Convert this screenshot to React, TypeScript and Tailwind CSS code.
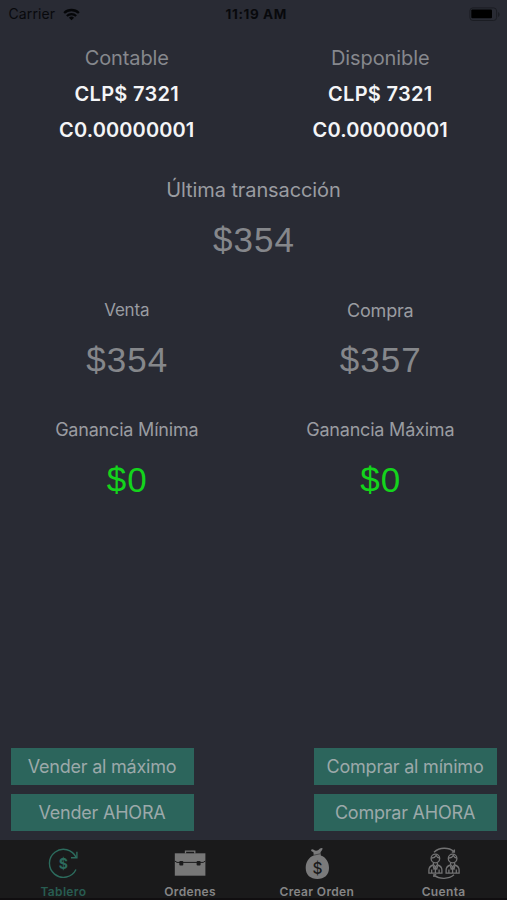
import type { ReactNode } from "react";

function WifiIcon() {
  return (
    <svg width="17" height="13" viewBox="0 0 18 13" fill="none" stroke="#050608" strokeWidth="2.4">
      <path d="M1.2 4.9a11.2 11.2 0 0 1 15.6 0" />
      <path d="M4.1 8.1a7.1 7.1 0 0 1 9.8 0" />
      <path d="M9 12.7 6.3 10a3.9 3.9 0 0 1 5.4 0z" fill="#050608" stroke="none" />
    </svg>
  );
}

function BatteryIcon() {
  return (
    <svg width="32" height="15" viewBox="0 0 32 15">
      <rect x="0.9" y="0.9" width="26.7" height="12.6" rx="3" fill="none" stroke="#1b1d23" strokeWidth="1" />
      <rect x="2.3" y="2.5" width="20.7" height="8.8" rx="1" fill="#000" />
      <path d="M29 5v5c1-.4 1.6-1.3 1.6-2.5S30 5.4 29 5z" fill="#1b1d23" />
    </svg>
  );
}

function StatusBar() {
  return (
    <header className="grid h-7 grid-cols-3 items-center pl-[8.5px] pr-[6px] text-[#08090c]">
      <div className="flex items-center gap-[7.5px]">
        <span className="text-[14px] leading-none tracking-[0.1px]">Carrier</span>
        <WifiIcon />
      </div>
      <span className="pl-[3px] pt-px text-center text-[13.5px] font-bold leading-none tracking-[0.6px]">
        11:19 AM
      </span>
      <div className="flex justify-end">
        <BatteryIcon />
      </div>
    </header>
  );
}

function Balance({ label }: { label: string }) {
  return (
    <div className="flex flex-col items-center">
      <h2 className="flex h-[34px] items-center text-[20px] tracking-[-0.1px] text-[#86888d]">{label}</h2>
      <p className="flex h-[37px] items-center text-[20px] font-semibold tracking-[0.3px]">CLP$ 7321</p>
      <p className="flex h-[35px] items-center text-[20px] font-semibold tracking-[0.12px]">C0.00000001</p>
    </div>
  );
}

type QuoteProps = { label: string; value: string; labelClass?: string; valueClass?: string };

function Quote({
  label,
  value,
  labelClass = "text-[18px] tracking-[-0.2px]",
  valueClass = "text-[#85878b]",
}: QuoteProps) {
  return (
    <div className="flex h-[120px] flex-col items-center">
      <h3 className={`flex h-10 items-center whitespace-nowrap text-[#9a9ca1] ${labelClass}`}>{label}</h3>
      <p
        className={`flex h-[60px] items-center pl-px font-['Liberation_Sans',sans-serif] text-[35px] tracking-[1px] ${valueClass}`}
      >
        {value}
      </p>
    </div>
  );
}

function TradeButton({ children }: { children: ReactNode }) {
  return (
    <button className="h-[37px] w-[183px] whitespace-nowrap bg-[#2c655c] text-[18px] tracking-[-0.22px] text-[#9ca9aa]">
      {children}
    </button>
  );
}

function DashboardIcon() {
  return (
    <svg width="32" height="32" viewBox="0 0 32 32" fill="none" stroke="#2c6b5d" strokeWidth="1.4">
      <path d="M29 22.5A14 14 0 1 1 29.2 10.5" />
      <path d="M24 10.8h5.9V4.7" />
      <text
        x="16.3"
        y="21.6"
        textAnchor="middle"
        fill="#2c6b5d"
        stroke="none"
        fontSize="14"
        fontWeight="700"
        fontFamily="Inter, sans-serif"
      >
        $
      </text>
    </svg>
  );
}

function BriefcaseIcon() {
  return (
    <svg width="32" height="32" viewBox="0 0 32 32">
      <path d="M11.5 6.5V4.200h9.300v2.300" fill="none" stroke="#777" strokeWidth="1.3" />
      <path d="M.8 6.300h30.600v22.400H.8z" fill="#777" />
      <path d="M.8 14 3 15.400h26.200l2.200-1.400" fill="none" stroke="#1b1b1c" strokeWidth="1" />
      <rect x="5.3" y="14" width="4" height="4.5" rx="1" fill="#1b1b1c" />
      <rect x="22.6" y="14" width="4" height="4.5" rx="1" fill="#1b1b1c" />
    </svg>
  );
}

function MoneyBagIcon() {
  return (
    <svg width="32" height="32" viewBox="0 0 32 32">
      <path
        d="M10.2 3.900c-.3-1.700 1.200-2.300 2.500-1.100 1.400 1.200 3.400 1.100 4.700.1 1-.8 2.300-1.900 3.600-1.800.9.200.6 1.200.1 1.900L19.500 5.300l.3 3.300C25 10.200 28 15.500 28 21c0 7-4.700 11-11.600 11S4.700 28 4.700 21c0-5.500 3-10.800 8.100-12.400l-.4-3.400z"
        fill="#7a7a7b"
      />
      <path d="m12.600 8.200 7.200-1.500" stroke="#3c3c3d" strokeWidth=".8" />
      <text
        x="16.4"
        y="26.5"
        textAnchor="middle"
        fill="#1b1b1c"
        fontSize="15.5"
        fontWeight="500"
        fontFamily="Inter, sans-serif"
      >
        $
      </text>
    </svg>
  );
}

function Person({ x }: { x: number }) {
  return (
    <g transform={`translate(${x} 0)`}>
      <circle cx="7" cy="11.5" r="4.3" />
      <path d="M3 11c2.500.2 4-1.200 4.800-2.600.5 1.400 1.700 2.400 3.300 2.600" />
      <path d="M5 15.500v2.300l2 2.200 2-2.200v-2.300" />
      <path d="M5 18c-3 .8-4.500 2-4.500 5v3.200h13V23c0-3-1.500-4.200-4.500-5" />
      <path d="M3.300 22.500v3.500m7.400-3.500v3.500M7 20v6M4.800 19l.8 3L7 20.500 8.400 22l.8-3" />
    </g>
  );
}

function AccountIcon() {
  return (
    <svg width="32" height="32" viewBox="0 0 32 32" fill="none" stroke="#737374" strokeWidth="1.3">
      <path d="M6 5.200C11.500.1 20.500 0 26 4.600M23.800 5.200l2.600-.1V2.500" />
      <path d="M26 27.800c-5 4.500-14.500 4.600-20 .6M8.300 27.700l-2.500.2v2.200" />
      <Person x={0.4} />
      <Person x={17.6} />
    </svg>
  );
}

const tabs = [
  { label: "Tablero", icon: <DashboardIcon />, active: true },
  { label: "Ordenes", icon: <BriefcaseIcon />, active: false },
  { label: "Crear Orden", icon: <MoneyBagIcon />, active: false },
  { label: "Cuenta", icon: <AccountIcon />, active: false },
];

function TabBar() {
  return (
    <nav className="grid h-[60px] grid-cols-4 border-b-2 border-[#100e10] bg-[#1a1a1b]">
      {tabs.map((tab) => (
        <a key={tab.label} className="flex flex-col items-center pt-[7px]">
          {tab.icon}
          <span
            className={`mt-[5px] whitespace-nowrap text-[12px] font-semibold leading-4 tracking-[0.35px] ${
              tab.active ? "text-[#285c51]" : "text-[#858586]"
            }`}
          >
            {tab.label}
          </span>
        </a>
      ))}
    </nav>
  );
}

export default function App() {
  return (
    <div className="flex h-[900px] w-[507px] flex-col overflow-hidden bg-[#292b34] font-['Inter',sans-serif] text-[#f4f5f7]">
      <StatusBar />
      <main className="flex flex-1 flex-col pt-[13px]">
        <section className="grid grid-cols-2">
          <Balance label="Contable" />
          <Balance label="Disponible" />
        </section>
        <section className="pt-[23px]">
          <Quote label="Última transacción" value="$354" labelClass="text-[20px] tracking-[-0.1px]" />
          <div className="grid grid-cols-2">
            <Quote label="Venta" value="$354" labelClass="pt-px text-[17px] tracking-[-0.2px]" />
            <Quote label="Compra" value="$357" />
            <Quote
              label="Ganancia Mínima"
              value="$0"
              labelClass="pb-[2px] text-[18px] tracking-[-0.2px]"
              valueClass="text-[#14d41c]"
            />
            <Quote
              label="Ganancia Máxima"
              value="$0"
              labelClass="pb-[2px] text-[18px] tracking-[-0.2px]"
              valueClass="text-[#14d41c]"
            />
          </div>
        </section>
        <section className="mt-auto flex justify-between px-[10.5px] pb-[9px]">
          <div className="flex flex-col gap-[9.5px]">
            <TradeButton>Vender al máximo</TradeButton>
            <TradeButton>Vender AHORA</TradeButton>
          </div>
          <div className="flex flex-col gap-[9.5px]">
            <TradeButton>Comprar al mínimo</TradeButton>
            <TradeButton>Comprar AHORA</TradeButton>
          </div>
        </section>
      </main>
      <TabBar />
    </div>
  );
}
